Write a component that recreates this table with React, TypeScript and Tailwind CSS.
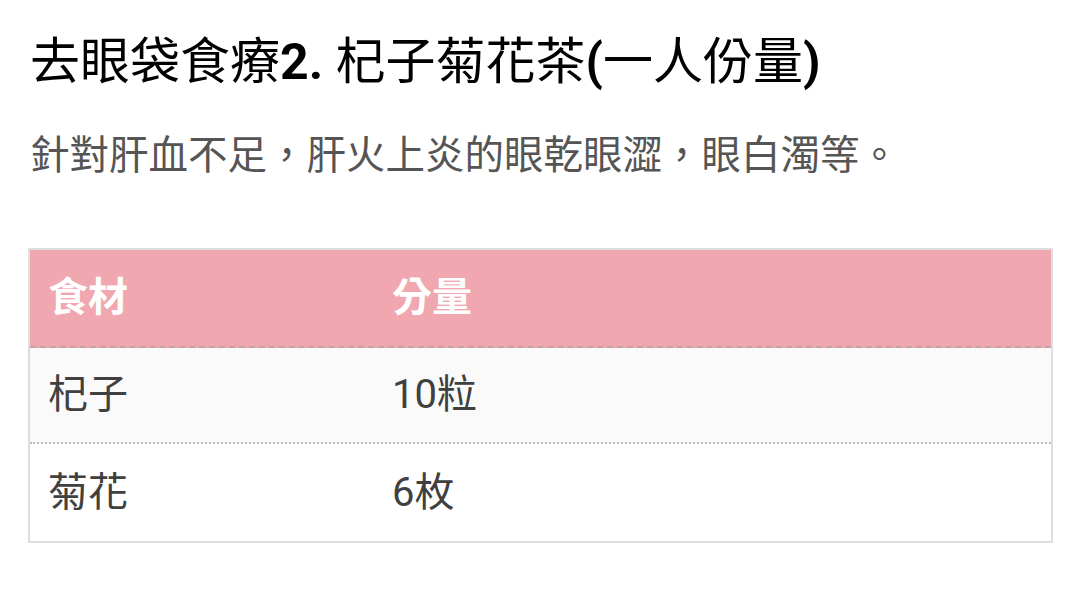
const rows = [
  { name: '杞子', amount: '10粒' },
  { name: '菊花', amount: '6枚' },
];

export default function App() {
  return (
    <div className="min-h-screen bg-white px-[30px] pt-[30px] font-['Roboto','Noto_Sans_CJK_TC',sans-serif]">
      <h1 className="text-[50px] leading-[64px] font-normal text-black">
        去眼袋食療<span className="font-bold">2.</span> 杞子菊花茶<span className="font-bold">(</span>一人份量<span className="font-bold">)</span>
      </h1>
      <p className="mt-[34px] text-[39.5px] leading-[56px] text-[#555]">
        針對肝血不足，肝火上炎的眼乾眼澀，眼白濁等。
      </p>

      <div className="mt-[64px] -ml-[2px] w-[1025px] border-2 border-[#dedede]">
        <div className="flex h-[98px] items-center bg-[#f0a7b0] border-b-2 border-dashed border-[#c4a2a8] text-[40px] font-bold text-white">
          <div className="w-[344px] pl-[18px]">食材</div>
          <div className="flex-1 pl-[18px]">分量</div>
        </div>
        {rows.map((r, i) => (
          <div
            key={r.name}
            className={
              i === 0
                ? 'flex h-[96px] items-center bg-[#fafafa] border-b-2 border-dotted border-[#bdbdbd] text-[40px] text-[#404040]'
                : 'flex h-[97px] items-center bg-white text-[40px] text-[#404040]'
            }
          >
            <div className="w-[344px] pl-[18px]">{r.name}</div>
            <div className="flex-1 pl-[18px]">{r.amount}</div>
          </div>
        ))}
      </div>
    </div>
  );
}
